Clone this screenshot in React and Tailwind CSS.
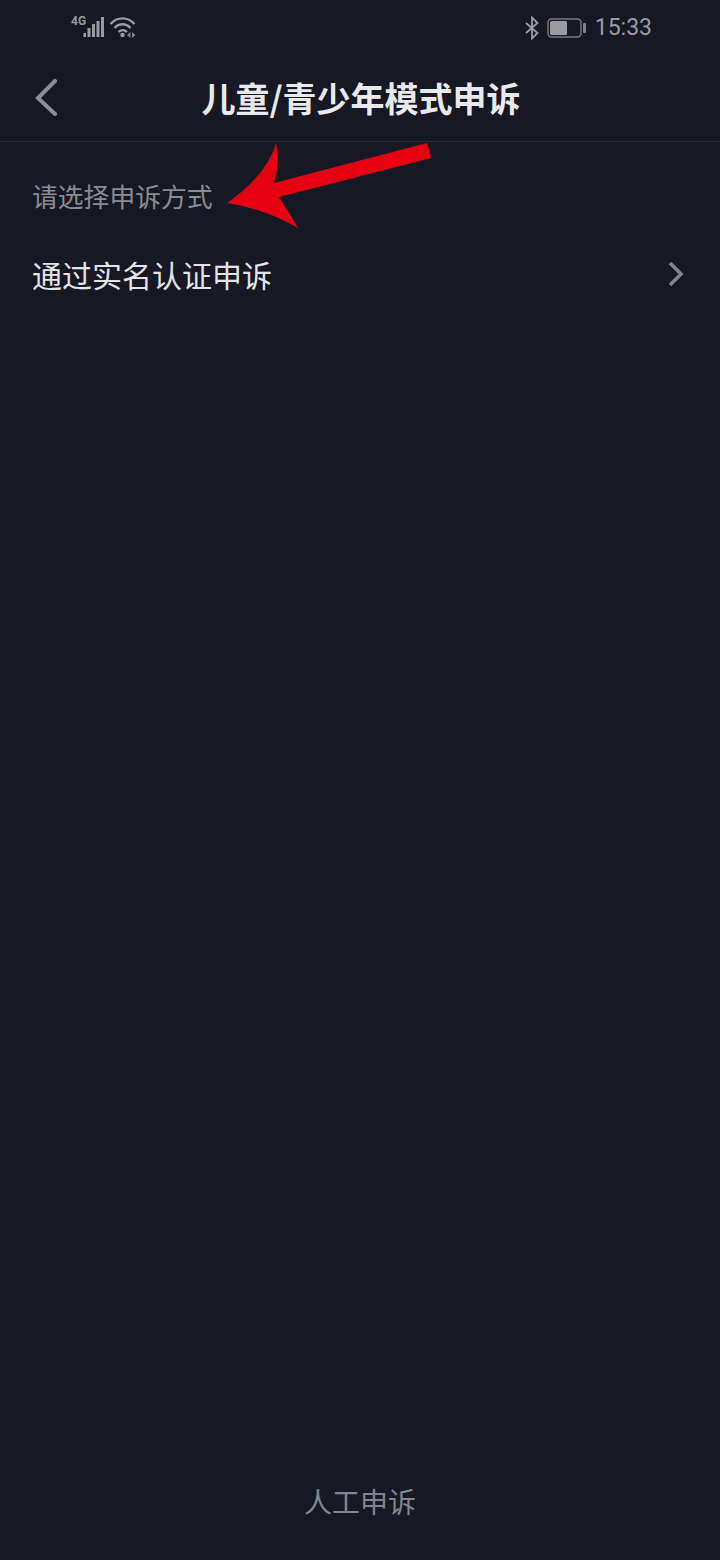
import React from "react";

const cjk = { fontFamily: '"Noto Sans CJK SC", sans-serif' };

function SignalIcon() {
  return (
    <svg width="60" height="30" viewBox="0 0 60 30" className="text-[#9b9ba1]">
      <rect x="3.5" y="18" width="2.5" height="4" fill="currentColor" />
      <rect x="7.5" y="13" width="3" height="9" fill="currentColor" />
      <rect x="12" y="9" width="3" height="13" fill="currentColor" />
      <rect x="16.5" y="6" width="3" height="16" fill="currentColor" />
      <rect x="21" y="2" width="3" height="20" fill="currentColor" />
      {/* wifi */}
      <g fill="none" stroke="currentColor" strokeWidth="2.4">
        <path d="M30.5 9 C37 1.5 48 1.5 54.5 9" />
        <path d="M34.5 13 C39 8 46 8 50.5 13" />
        <path d="M38.5 17 C41 14.6 44.5 14.6 47 17" />
      </g>
      <circle cx="42.5" cy="20" r="2.2" fill="currentColor" />
      <path d="M47 20 L50.5 17 V23 Z M52 17 L55.5 20 L52 23 Z" fill="currentColor" opacity="0.8" />
    </svg>
  );
}

function StatusBar() {
  return (
    <div className="relative flex h-[54px] items-start justify-between pt-[15px] pl-[71px] pr-[68px]">
      <div className="relative flex">
        <span
          className="absolute left-0 top-[0px] text-[12px] leading-[12px] font-bold text-[#9b9ba1]"
          style={{ fontFamily: '"Roboto", sans-serif' }}
        >
          4G
        </span>
        <div className="ml-[9px]">
          <SignalIcon />
        </div>
      </div>
      <div className="flex items-center text-[#9b9ba1]">
        <svg width="14" height="24" viewBox="0 0 14 24" fill="none" stroke="currentColor" strokeWidth="1.8">
          <path d="M1 7 L12.5 17 L7 22.5 V1.5 L12.5 7 L1 17" />
        </svg>
        <svg width="40" height="20" viewBox="0 0 40 20" className="ml-[8px]">
          <rect x="1" y="1" width="33" height="18" rx="3.5" fill="none" stroke="currentColor" strokeWidth="1.4" opacity="0.75" />
          <rect x="3" y="3" width="17" height="14" rx="1.5" fill="currentColor" />
          <rect x="36" y="5" width="3" height="10" rx="1" fill="currentColor" opacity="0.8" />
        </svg>
        <span className="ml-[8px] text-[23px] leading-[26px]" style={{ fontFamily: '"Roboto", sans-serif' }}>
          15:33
        </span>
      </div>
    </div>
  );
}

function RedArrow() {
  return (
    <svg
      width="210"
      height="90"
      viewBox="0 0 210 90"
      className="pointer-events-none absolute left-[225px] top-[141px]"
    >
      <path
        d="M2 62 Q42 34 51 2 Q55 22 49 42 L202 2 L206 17 L54 56 Q64 72 73 87 Q40 68 2 62 Z"
        fill="#e60012"
      />
    </svg>
  );
}

export default function App() {
  return (
    <div className="relative flex h-[1560px] w-[720px] flex-col bg-[#161824]" style={cjk}>
      <StatusBar />
      <header className="relative flex h-[88px] items-center justify-center border-b border-[#2a2c37]">
        <button className="absolute left-[35px] top-[25px]">
          <svg width="24" height="38" viewBox="0 0 24 38" fill="none" stroke="#8e8e94" strokeWidth="4" strokeLinecap="round" strokeLinejoin="miter">
            <path d="M20 2 L3 19 L20 35" />
          </svg>
        </button>
        <h1 className="pl-[2px] text-[34px] leading-[42px] font-bold text-[#e9e9eb]">儿童/青少年模式申诉</h1>
      </header>

      <p className="mt-[37px] pl-[32px] text-[25.8px] leading-[34px] text-[#8b8c93]">请选择申诉方式</p>

      <div className="mt-[41px] flex items-center justify-between pl-[32px] pr-[36px]">
        <span className="text-[30px] leading-[40px] text-[#e4e4e7]">通过实名认证申诉</span>
        <svg width="16" height="26" viewBox="0 0 16 26" fill="none" stroke="#83848b" strokeWidth="3.6">
          <path d="M2 2 L13 13 L2 24" />
        </svg>
      </div>

      <div className="mt-auto pb-[41px] text-center text-[28px] leading-[36px] text-[#84858c]">人工申诉</div>

      <RedArrow />
    </div>
  );
}
